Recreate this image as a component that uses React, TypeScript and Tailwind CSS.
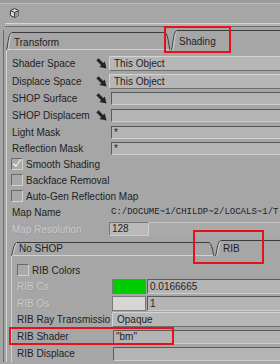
import React from 'react';

const sans = "font-['Liberation_Sans',Arial,sans-serif]";
const mono = "font-['Liberation_Mono','Courier_New',monospace]";

const Arrow = () => (
  <svg width="11" height="11" viewBox="0 0 11 11" className="shrink-0">
    <path d="M0 2 L2.2 0 L7.2 5 L8.8 3.4 L10.5 10.5 L3.4 9 L5.2 7.2 Z" fill="#242424" />
    <path d="M0.3 1.8 L2.2 0.3" stroke="#d8d8d8" strokeWidth="0.8" />
  </svg>
);

const Cube = () => (
  <svg width="9" height="10" viewBox="0 0 9 10">
    <path d="M4.5 0.5 L8.5 2.5 L8.5 7.5 L4.5 9.5 L0.5 7.5 L0.5 2.5 Z" fill="#d8d8d8" stroke="#3a3a3a" />
    <path d="M4.5 4.5 L8.5 2.5 L8.5 7.5 L4.5 9.5 Z" fill="#9a9a9a" />
    <path d="M0.5 2.5 L4.5 4.5 L8.5 2.5 M4.5 4.5 L4.5 9.5" stroke="#3a3a3a" fill="none" />
  </svg>
);

const CurveLeft = ({ h }: { h: number }) => (
  <svg width="6" height={h} viewBox={`0 0 6 ${h}`} className="shrink-0">
    <path d={`M0.5 ${h} C2 ${h - 4} 2 3 5.5 0.5`} stroke="#3c3c3c" fill="none" />
    <path d={`M1.8 ${h} C3.2 ${h - 4} 3.2 3.5 6 1.6`} stroke="#d4d4d4" fill="none" />
  </svg>
);

const CurveRight = ({ h }: { h: number }) => (
  <svg width="6" height={h} viewBox={`0 0 6 ${h}`} className="shrink-0">
    <path d={`M0 0.5 C3.5 2.5 3.5 ${h - 4} 5 ${h}`} stroke="#3c3c3c" fill="none" />
  </svg>
);

function Tab({
  label,
  active,
  h,
  box,
  text,
  className,
}: {
  label: string;
  active?: boolean;
  h: number;
  box: string;
  text: string;
  className: string;
}) {
  return (
    <div className={`flex items-end ${className}`}>
      <div className={`flex w-full ${box} ${active ? '' : 'border-b border-[#d0d0d0]'}`}>
        <CurveLeft h={h} />
        <div className={`flex-1 border-t border-[#3c3c3c] pl-[2px] leading-[12px] text-[#222] ${text}`}>{label}</div>
        {!active && <CurveRight h={h} />}
      </div>
    </div>
  );
}

const Menu = ({ children }: { children: React.ReactNode }) => (
  <div className="flex-1 h-[15px] bg-[#b6b6b6] border border-[#6e6e6e] border-t-[#d4d4d4] border-l-[#d4d4d4] rounded-[2px] pl-[4px] leading-[13px] text-[#222] whitespace-nowrap">
    {children}
  </div>
);

const Field = ({ children, className = '' }: { children?: React.ReactNode; className?: string }) => (
  <div
    className={`flex-1 h-[13px] bg-[#b4b4b4] border border-[#cdcdcd] border-t-[#5a5a5a] border-l-[#5a5a5a] pl-[2px] leading-[11px] text-[#222] whitespace-nowrap ${className}`}
  >
    {children}
  </div>
);

const Check = ({ checked }: { checked?: boolean }) => (
  <div className="w-[12px] h-[12px] shrink-0 bg-[#a9a9a9] border border-[#d2d2d2] border-t-[#6a6a6a] border-l-[#6a6a6a] flex items-center justify-center">
    {checked && (
      <svg width="10" height="10" viewBox="0 0 10 10">
        <path d="M1.5 5 L4 8 L9 0.5" stroke="#f2f2f2" strokeWidth="2" fill="none" />
        <path d="M1.5 6 L4 9 L9 1.5" stroke="#6a6a6a" strokeWidth="0.6" fill="none" />
      </svg>
    )}
  </div>
);

const disabled = 'text-[#cacaca] [text-shadow:1px_1px_0_#9c9c9c]';

export default function App() {
  return (
    <div className={`relative w-[280px] h-[364px] overflow-hidden bg-[#a6a6a6] ${sans} text-[10px] text-[#222]`}>
      <div className="h-[4px] bg-[#9a9a9a] border-b border-[#bdbdbd]" />
      <div className="h-[19px] pl-[10px] pt-[4px]">
        <Cube />
      </div>
      <div className="ml-[5px] h-[4px] border-t border-[#d4d4d4] border-b border-b-[#6c6c6c] bg-[#b2b2b2]" />

      <div className="flex w-[300px] ml-[3px] mt-[3px]">
        <div className="w-[1px] bg-[#6a6a6a]" />
        <div className="flex-1 pl-[2px]">
          {/* top tab bar */}
          <div className="flex h-[20px]">
            <Tab label="Transform" h={18} box="h-[18px]" text="pt-[4px]" className="w-[165px]" />
            <Tab label="Shading" active h={20} box="h-[20px]" text="pt-[5px]" className="flex-1" />
          </div>

          <div className="border-l border-[#d2d2d2] pl-[5px] pt-[4px]">
            <div className="flex items-center h-[18px]">
              <span className="w-[84px]">Shader Space</span>
              <div className="w-[13px] flex"><Arrow /></div>
              <Menu>This Object</Menu>
            </div>
            <div className="flex items-center h-[18px]">
              <span className="w-[84px]">Displace Space</span>
              <div className="w-[13px] flex"><Arrow /></div>
              <Menu>This Object</Menu>
            </div>
            <div className="flex items-center h-[17px]">
              <span className="w-[84px]">SHOP Surface</span>
              <div className="w-[15px] flex"><Arrow /></div>
              <Field />
            </div>
            <div className="flex items-center h-[17px]">
              <span className="w-[84px]">SHOP Displacem</span>
              <div className="w-[15px] flex"><Arrow /></div>
              <Field />
            </div>
            <div className="flex items-center h-[16px]">
              <span className="w-[99px]">Light Mask</span>
              <Field>*</Field>
            </div>
            <div className="flex items-center h-[16px]">
              <span className="w-[99px]">Reflection Mask</span>
              <Field>*</Field>
            </div>
            <div className="flex items-center h-[16px] -ml-[1px] gap-[3px]">
              <Check checked />
              <span>Smooth Shading</span>
            </div>
            <div className="flex items-center h-[16px] -ml-[1px] gap-[3px]">
              <Check />
              <span>Backface Removal</span>
            </div>
            <div className="flex items-center h-[16px] -ml-[1px] gap-[3px]">
              <Check />
              <span>Auto-Gen Reflection Map</span>
            </div>
            <div className="flex items-center h-[17px]">
              <span className="w-[99px] shrink-0">Map Name</span>
              <span className={`${mono} text-[9px] whitespace-nowrap`}>C:/DOCUME~1/CHILDP~2/LOCALS~1/T</span>
            </div>
            <div className="flex items-center h-[16px]">
              <span className={`w-[97px] ${disabled}`}>Map Resolution</span>
              <div className="w-[40px] h-[14px] bg-[#b9b9b9] border border-[#cdcdcd] border-t-[#7a7a7a] border-l-[#7a7a7a] pl-[2px] leading-[12px]">128</div>
              <div className="flex-1 h-[14px] bg-[#aaaaaa] border-t border-[#c4c4c4]" />
            </div>

            {/* nested tab bar */}
            <div className="flex h-[16px] mt-[3px] -ml-[1px]">
              <Tab label="No SHOP" h={14} box="h-[14px]" text="pt-0" className="w-[204px]" />
              <Tab label="RIB" active h={16} box="h-[16px]" text="pt-[2px]" className="flex-1" />
            </div>
            <div className="-ml-[1px] border-l border-[#d2d2d2] pl-[5px] pt-[6px]">
              <div className="flex items-center h-[16px] gap-[3px]">
                <Check />
                <span>RIB Colors</span>
              </div>
              <div className="flex items-center h-[17px]">
                <span className={`w-[95px] ${disabled}`}>RIB Cs</span>
                <div className="w-[34px] h-[15px] bg-[#00cc00] border border-[#7a7a7a]" />
                <Field className="h-[15px] leading-[13px] ml-[1px]">0.0166665</Field>
              </div>
              <div className="flex items-center h-[16px]">
                <span className={`w-[95px] ${disabled}`}>RIB Os</span>
                <div className="w-[34px] h-[15px] bg-[#d6d6d6] border border-[#7a7a7a]" />
                <Field className="h-[15px] leading-[13px] ml-[1px]">1</Field>
              </div>
              <div className="flex items-center h-[17px]">
                <span className="w-[95px] whitespace-nowrap overflow-hidden">RIB Ray Transmissio</span>
                <Menu>Opaque</Menu>
              </div>
              <div className="flex items-center h-[17px]">
                <span className="w-[96px]">RIB Shader</span>
                <Field className="h-[14px] leading-[12px]">"bm"</Field>
              </div>
              <div className="flex items-center h-[17px]">
                <span className="w-[96px]">RIB Displace</span>
                <Field className="h-[14px]" />
              </div>
            </div>
          </div>
        </div>
      </div>

      {/* red annotation boxes */}
      <div className="absolute left-[164px] top-[26px] w-[67px] h-[27px] border-2 border-[#e8101a]" />
      <div className="absolute left-[193px] top-[230px] w-[71px] h-[34px] border-2 border-[#e8101a]" />
      <div className="absolute left-[9px] top-[327px] w-[165px] h-[18px] border-2 border-[#e8101a]" />
    </div>
  );
}
